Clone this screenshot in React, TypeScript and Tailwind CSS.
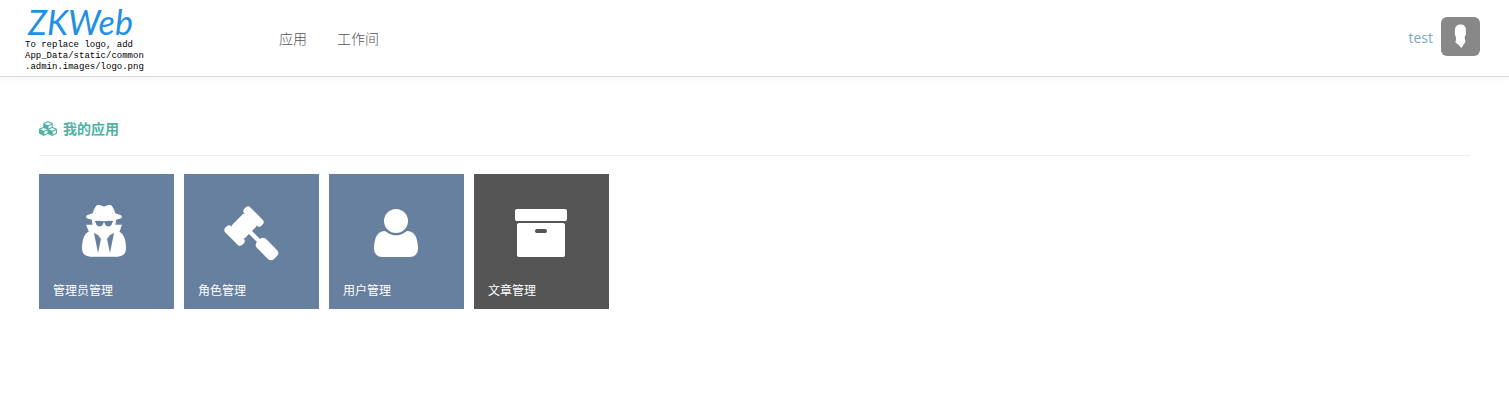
import type { ReactNode } from "react";

type IconProps = { className?: string };

function Glyph({ d, viewBox = "0 0 1792 1792", className }: { d: string; viewBox?: string; className?: string }) {
  return (
    <svg viewBox={viewBox} className={className} fill="currentColor" aria-hidden="true">
      <path d={d} />
    </svg>
  );
}

const SecretIcon = (p: IconProps) => (
  <Glyph
    {...p}
    viewBox="64 0 1792 1792"
    d="M704 1536l96-448-96-128-128-64zm384 0l128-640-128 64-96 128zm96-1022q-2-4-4-6-10-8-96-8-70 0-167 19-7 2-21 2t-21-2q-97-19-167-19-86 0-96 8-2 2-4 6 2 18 4 27 2 3 7.5 6.5t7.5 10.5q2 4 7.5 20.5t7 20.5 7.5 17 8.5 17 9 14 12 13.5 14 9.5 17.5 8 20.5 4 24.500 2q36 0 59-12.500t32.500-30 14.500-34.500 11.500-29.500 17.500-12.500h12q11 0 17.500 12.500t11.500 29.500 14.500 34.500 32.500 30 59 12.500q13 0 24.500-2t20.500-4 17.500-8 14-9.500 12-13.500 9-14 8.500-17 7.500-17 7-20.500 7.500-20.500q2-7 7.500-10.500t7.500-6.500q2-9 4-27zm416 879q0 121-73 190t-194 69h-874q-121 0-194-69t-73-190q0-61 4.500-118t19-125.500 37.500-123.500 63.500-103.500 93.500-74.500l-90-220h214q-22-64-22-128 0-12 2-32-194-40-194-96 0-57 210-99 17-62 51.500-134t70.500-114q32-37 76-37 30 0 84 31t84 31 84-31 84-31q44 0 76 37 36 42 70.500 114t51.500 134q210 42 210 99 0 56-194 96 7 81-20 160h214l-82 225q63 33 107.500 96.500t65.500 143.500 29 151.500 8 148.500z"
  />
);

const GavelIcon = (p: IconProps) => (
  <Glyph
    {...p}
    d="M1771 1536q0 53-37 90l-107 108q-39 37-91 37-53 0-90-37l-363-364q-38-36-38-90 0-53 43-96l-256-256-126 126q-14 14-34 14t-34-14q2 2 12.5 12t12.5 13 10 11.5 10 13.5 6 13.5 5.5 16.5 1.5 18q0 38-28 68-3 3-16.5 18t-19 20.5-18.5 16.5-22 15.5-22 9-26 4.5q-40 0-68-28l-408-408q-28-28-28-68 0-13 4.5-26t9-22 15.5-22 16.5-18.5 20.5-19 18-16.5q30-28 68-28 10 0 18 1.5t16.5 5.5 13.5 6 13.5 10 11.5 10 13 12.5 12 12.5q-14-14-14-34t14-34l348-348q14-14 34-14t34 14q-2-2-12.5-12t-12.5-13-10-11.5-10-13.5-6-13.5-5.5-16.5-1.5-18q0-38 28-68 3-3 16.5-18t19-20.5 18.5-16.5 22-15.5 22-9 26-4.5q40 0 68 28l408 408q28 28 28 68 0 13-4.5 26t-9 22-15.5 22-16.5 18.5-20.5 19-18 16.5q-30 28-68 28-10 0-18-1.5t-16.5-5.5-13.5-6-13.5-10-11.5-10-13-12.5-12-12.5q14 14 14 34t-14 34l-126 126 256 256q43-43 96-43 52 0 91 37l363 363q37 39 37 91z"
  />
);

const UserIcon = (p: IconProps) => (
  <Glyph
    {...p}
    d="M1600 1405q0 120-73 189.5t-194 69.5h-874q-121 0-194-69.5t-73-189.5q0-53 3.5-103.5t14-109 26.5-108.5 43-97.5 62-81 85.5-53.5 111.5-20q9 0 42 21.5t74.5 48 108 48 133.5 21.5 133.5-21.5 108-48 74.5-48 42-21.5q61 0 111.5 20t85.5 53.5 62 81 43 97.5 26.5 108.5 14 109 3.5 103.5zm-320-893q0 159-112.5 271.5t-271.5 112.5-271.5-112.5-112.5-271.5 112.5-271.5 271.5-112.5 271.5 112.5 112.5 271.5z"
  />
);

const ArchiveIcon = (p: IconProps) => (
  <Glyph
    {...p}
    d="M1088 832q0-26-19-45t-45-19h-256q-26 0-45 19t-19 45 19 45 45 19h256q26 0 45-19t19-45zm576-192v960q0 26-19 45t-45 19h-1408q-26 0-45-19t-19-45v-960q0-26 19-45t45-19h1408q26 0 45 19t19 45zm64-448v256q0 26-19 45t-45 19h-1536q-26 0-45-19t-19-45v-256q0-26 19-45t45-19h1536q26 0 45 19t19 45z"
  />
);

const CubesIcon = (p: IconProps) => (
  <Glyph
    {...p}
    viewBox="0 0 2304 1792"
    d="M640 1632l384-192v-314l-384 164v342zm-64-454l404-173-404-173-404 173zm1088 454l384-192v-314l-384 164v342zm-64-454l404-173-404-173-404 173zm-448-293l384-165v-266l-384 164v267zm-64-379l441-189-441-189-441 189zm1088 518v416q0 36-19 67t-52 47l-448 224q-25 14-57 14t-57-14l-448-224q-4-2-7-4-2 2-7 4l-448 224q-25 14-57 14t-57-14l-448-224q-33-16-52-47t-19-67v-416q0-38 21.5-70t56.5-48l434-186v-400q0-38 21.5-70t56.5-48l448-192q23-10 50-10t50 10l448 192q35 16 56.5 48t21.5 70v400l434 186q36 16 57 48t21 70z"
  />
);

function Avatar() {
  return (
    <svg viewBox="0 0 39 39" className="size-[39px] rounded-md bg-[#888]" aria-hidden="true">
      <path
        fill="#fff"
        d="M19.300 7.500c3.700 0 5.600 2 5.600 5.200 0 1.400-.1 2.300.1 3.300.2 1.300-.4 2-.9 3.100-.5 1.300-.4 2.600-.1 4 .1.900.8 1.300.3 2L20.500 31 17.600 28l-3-2.600c-.5-.5.300-1.300.4-2.300.2-1.500 0-2.700-.4-4-.5-1.100-1-2-.8-3.200.2-1 0-1.800.1-3 .2-3.400 2-5.400 5.400-5.400z"
      />
    </svg>
  );
}

function Tile({ label, color, children }: { label: string; color: string; children: ReactNode }) {
  return (
    <a href="#" className={`flex size-[135px] flex-col text-white ${color}`}>
      <span className="flex flex-1 justify-center pt-[31px] pr-px">{children}</span>
      <span className="px-3.5 pb-2 text-xs leading-5">{label}</span>
    </a>
  );
}

export default function App() {
  return (
    <div className="min-h-screen bg-white font-['Open_Sans','Noto_Sans_CJK_SC',sans-serif] text-sm">
      <header className="flex h-[77px] items-center border-b border-[#dcdcdc] pr-[29px] pl-[25px] shadow-[0_1px_6px_rgba(0,0,0,0.06)]">
        <a href="#" className="flex w-[239px] flex-col text-black">
          <span className="pl-[3px] font-['Lato'] text-[34px] leading-9 text-[#1e90e6] italic">ZKWeb</span>
          <span className="font-['Liberation_Mono',monospace] text-[9px] leading-[11px]">
            To replace logo, add
            <br />
            App_Data/static/common
            <br />
            .admin.images/logo.png
          </span>
        </a>
        <nav className="flex flex-1 gap-[30px] pt-0.5 pl-[15px] font-light text-[#555]">
          <a href="#">应用</a>
          <a href="#">工作间</a>
        </nav>
        <a href="#" className="flex items-center gap-2 pb-1 text-[#7ca7cc]">
          <span className="pt-1">test</span>
          <Avatar />
        </a>
      </header>
      <main className="px-[39px] pt-[41px]">
        <h1 className="flex items-center gap-[5px] border-b border-[#eee] pb-4 font-bold text-[#4db3a2]">
          <CubesIcon className="h-[15px] w-[19px]" />
          <span className="leading-[21px]">我的应用</span>
        </h1>
        <div className="flex flex-wrap gap-2.5 pt-[18px]">
          <Tile label="管理员管理" color="bg-[#67809f]">
            <SecretIcon className="size-14" />
          </Tile>
          <Tile label="角色管理" color="bg-[#67809f]">
            <GavelIcon className="size-14" />
          </Tile>
          <Tile label="用户管理" color="bg-[#67809f]">
            <UserIcon className="size-14" />
          </Tile>
          <Tile label="文章管理" color="bg-[#555]">
            <ArchiveIcon className="size-14" />
          </Tile>
        </div>
      </main>
    </div>
  );
}
